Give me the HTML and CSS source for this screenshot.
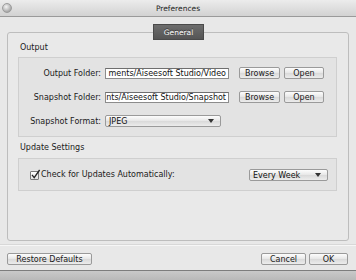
FILE: index.html
```html
<!DOCTYPE html>
<html>
<head>
<meta charset="utf-8">
<link rel="stylesheet" href="styles.css">
</head>
<body>
<div class="window">
  <div class="titlebar">
    <span class="light"></span>
    <span class="title">Preferences</span>
  </div>
  <div class="tabrow"><div class="tab">General</div></div>
  <div class="panel">
    <div class="section-label">Output</div>
    <div class="group output">
      <div class="label">Output Folder:</div>
      <div class="field"><span>ments/Aiseesoft Studio/Video</span></div>
      <div class="btn browse">Browse</div>
      <div class="btn open">Open</div>

      <div class="label">Snapshot Folder:</div>
      <div class="field"><span>nts/Aiseesoft Studio/Snapshot</span></div>
      <div class="btn browse">Browse</div>
      <div class="btn open">Open</div>

      <div class="label">Snapshot Format:</div>
      <div class="select format"><span>JPEG</span><span class="arrow"></span></div>
    </div>
    <div class="section-label second">Update Settings</div>
    <div class="group update">
      <div class="check">
        <span class="box"><svg class="tick" width="11" height="11" viewBox="0 0 11 11"><path d="M2 5.8 L4.2 8.6 L9.6 1" fill="none" stroke="#222" stroke-width="1.3"/></svg></span>
        <span>Check for Updates Automatically:</span>
      </div>
      <div class="select week"><span>Every Week</span><span class="arrow"></span></div>
    </div>
  </div>
  <div class="footer">
    <div class="btn restore">Restore Defaults</div>
    <div class="spacer"></div>
    <div class="btn cancel">Cancel</div>
    <div class="btn ok">OK</div>
  </div>
  <div class="bottombar"></div>
</div>
</body>
</html>
```
FILE: styles.css
```css
* { box-sizing: border-box; }
html, body { margin: 0; padding: 0; }
body {
  width: 356px;
  height: 280px;
  overflow: hidden;
  background: #e8e8e8;
  font-family: "DejaVu Sans", "Liberation Sans", sans-serif;
  font-size: 8px;
  color: #1a1a1a;
}
.window { width: 356px; height: 280px; display: flex; flex-direction: column; }
.titlebar {
  height: 17px;
  flex: none;
  background: linear-gradient(#ececec, #d2d2d2);
  border-bottom: 1px solid #9a9a9a;
  display: flex;
  align-items: center;
  justify-content: center;
  position: relative;
}
.light {
  position: absolute;
  left: 2px;
  top: 3px;
  width: 10px;
  height: 10px;
  border-radius: 50%;
  background: radial-gradient(circle at 40% 35%, #f4f4f4, #a9a9a9 70%, #8d8d8d);
  border: 1px solid #9c9c9c;
}
.title { font-size: 7.5px; color: #222; }
.tabrow {
  display: flex;
  justify-content: center;
  margin-top: 7px;
  margin-bottom: -8px;
  position: relative;
  z-index: 2;
  padding-left: 1px;
}
.tab {
  width: 51px;
  height: 16px;
  background: linear-gradient(#6d6d6d, #555);
  border: 1px solid #4a4a4a;
  color: #fff;
  font-size: 7.5px;
  display: flex;
  align-items: center;
  justify-content: center;
  text-shadow: 0 -1px 0 #333;
}
.panel {
  margin: 0 7px;
  height: 209px;
  border: 1px solid #bdbdbd;
  border-radius: 3px;
  background: #e9e9e9;
  padding: 9px 11px 0 10px;
  display: flex;
  flex-direction: column;
}
.section-label { height: 11px; line-height: 11px; padding-left: 2px; margin-bottom: 4px; }
.section-label.second { margin-top: 5px; margin-bottom: 5px; }
.group {
  border: 1px solid #cfcfcf;
  background: #e3e3e3;
}
.group.output {
  height: 80px;
  display: grid;
  grid-template-columns: 82px 124px 47px 40px;
  grid-auto-rows: 12px;
  column-gap: 4px;
  row-gap: 12px;
  padding: 9px 0 0 0;
  align-items: center;
}
.group.output .btn.browse { margin-left: 6px; }
.label { text-align: right; white-space: nowrap; }
.field {
  height: 11px;
  background: #fff;
  border: 1px solid #8c8c8c;
  border-top-color: #6e6e6e;
  overflow: hidden;
  display: flex;
  justify-content: flex-end;
  align-items: center;
  padding: 0 2px;
  white-space: nowrap;
  color: #111;
}
.btn {
  height: 12px;
  border: 1px solid #9a9a9a;
  border-radius: 2px;
  background: linear-gradient(#fdfdfd, #e6e6e6 50%, #d9d9d9 51%, #ececec);
  display: flex;
  align-items: center;
  justify-content: center;
  white-space: nowrap;
  color: #1a1a1a;
}
.select {
  height: 12px;
  border: 1px solid #9a9a9a;
  border-radius: 2px;
  background: linear-gradient(#fdfdfd, #e6e6e6 50%, #d9d9d9 51%, #ececec);
  display: flex;
  align-items: center;
  justify-content: space-between;
  padding: 0 6px 0 3px;
  color: #111;
}
.select.format { grid-column: 2 / span 2; width: 116px; }
.arrow {
  width: 0;
  height: 0;
  border-left: 3px solid transparent;
  border-right: 3px solid transparent;
  border-top: 4px solid #333;
}
.group.update {
  height: 33px;
  display: flex;
  align-items: center;
  justify-content: space-between;
  padding: 0 8px 0 11px;
}
.check { display: flex; align-items: center; gap: 2px; }
.box {
  width: 9px;
  height: 9px;
  border: 1px solid #7a7a7a;
  border-radius: 1px;
  background: linear-gradient(#fff, #e2e2e2);
  position: relative;
  margin-top: 1px;
}
.tick { position: absolute; left: -1px; top: -3px; }
.select.week { width: 79px; margin-top: 1px; }
.footer {
  flex: none;
  margin-top: 4px;
  border-top: 1px solid #f6f6f6;
  box-shadow: 0 -1px 0 #d8d8d8;
  height: 25px;
  display: flex;
  align-items: flex-start;
  padding: 7px 8px 0 7px;
  gap: 3px;
}
.spacer { flex: 1; }
.btn.restore { width: 85px; }
.btn.cancel { width: 45px; }
.btn.ok { width: 39px; }
.bottombar {
  flex: 1;
  border-top: 1px solid #7d7d7d;
  background: linear-gradient(#c9c9c9, #b9b9b9);
}
```
